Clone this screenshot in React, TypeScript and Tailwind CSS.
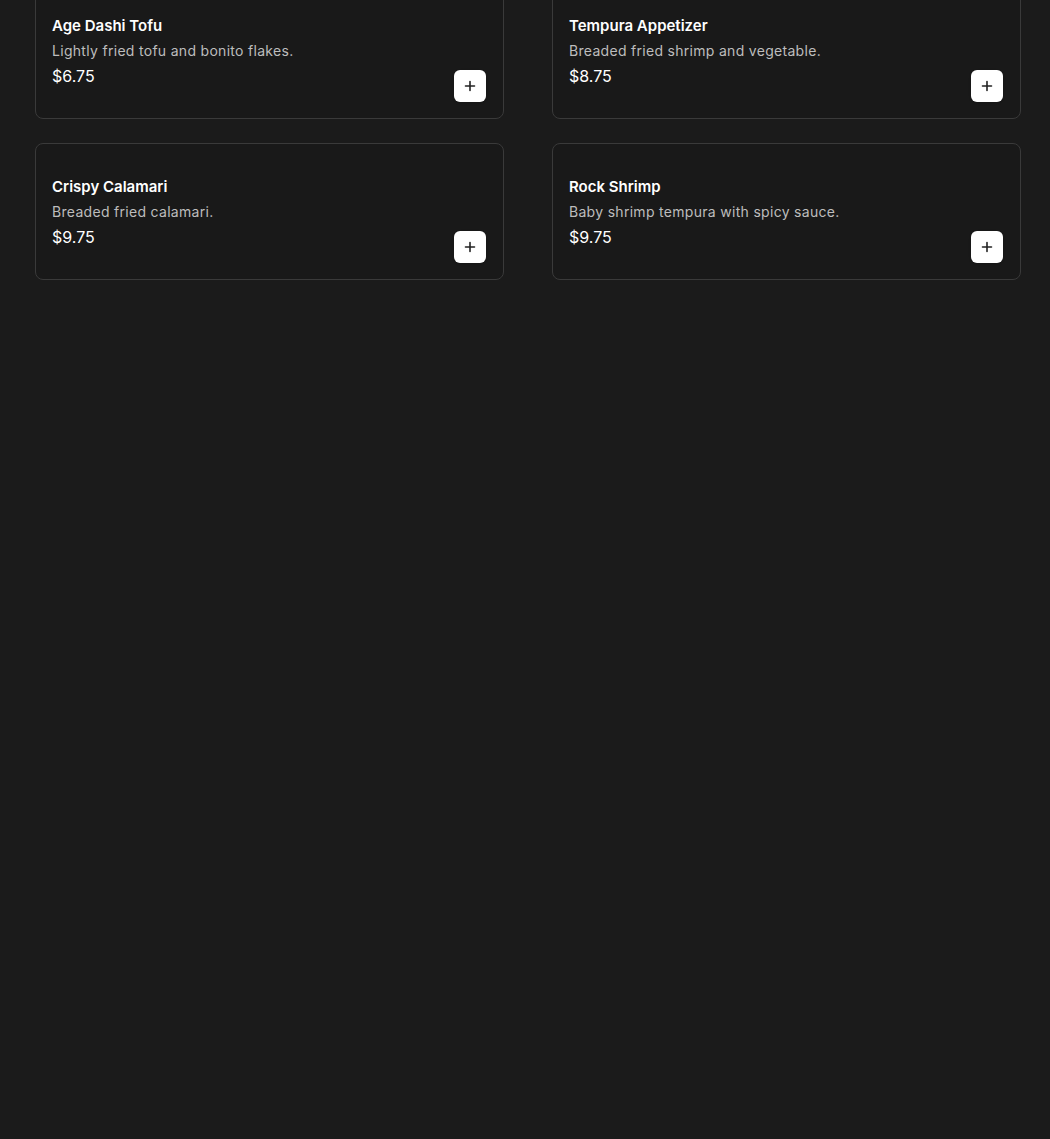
const items = [
  { name: "Age Dashi Tofu", desc: "Lightly fried tofu and bonito flakes.", price: "$6.75" },
  { name: "Tempura Appetizer", desc: "Breaded fried shrimp and vegetable.", price: "$8.75" },
  { name: "Crispy Calamari", desc: "Breaded fried calamari.", price: "$9.75" },
  { name: "Rock Shrimp", desc: "Baby shrimp tempura with spicy sauce.", price: "$9.75" },
];

function PlusIcon() {
  return (
    <svg width="12" height="12" viewBox="0 0 12 12" fill="none">
      <path d="M6 1.5v9M1.5 6h9" stroke="#222" strokeWidth="1.6" strokeLinecap="round" />
    </svg>
  );
}

export default function App() {
  return (
    <div className="min-h-[1139px] bg-[#1b1b1b] font-['Inter',sans-serif] overflow-hidden">
      <div className="grid grid-cols-2 gap-x-[48px] gap-y-6 pl-[35px] pr-[29px] -mt-[18px]">
        {items.map((item) => (
          <div
            key={item.name}
            className="h-[137px] rounded-lg border border-[#3a3a3a] bg-[#191919] pl-4 pr-[17px] pb-4 pt-[32px] flex items-end justify-between"
          >
            <div className="flex flex-col self-start">
              <p className="text-[15px] leading-[22px] font-semibold text-white">{item.name}</p>
              <p className="mt-[4px] text-[14px] leading-[20px] tracking-[0.3px] text-[#bdbdbd]">{item.desc}</p>
              <p className="mt-[5px] text-[16px] leading-[20px] text-white">{item.price}</p>
            </div>
            <button className="w-8 h-8 rounded-md bg-white flex items-center justify-center shadow">
              <PlusIcon />
            </button>
          </div>
        ))}
      </div>
    </div>
  );
}
